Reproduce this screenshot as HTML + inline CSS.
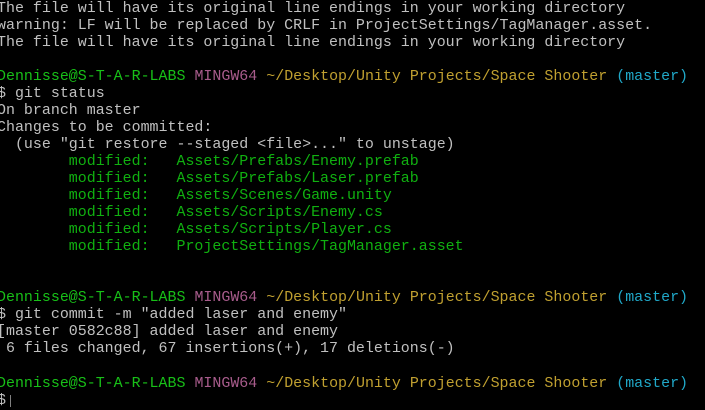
<!DOCTYPE html>
<html><head><style>
html,body{margin:0;padding:0;background:#000;width:705px;height:405px;overflow:hidden}
pre{margin:0;position:absolute;left:-3px;top:0.5px;font-family:"Liberation Mono",monospace;font-size:14.96px;line-height:17.05px;color:#c0c0c0;white-space:pre}
.g{color:#18c018}.m{color:#a85c8c}.y{color:#c0a030}.c{color:#20a8c8}.d{color:#10b010}
.cur{display:inline-block;width:1px;height:12px;background:#808080;vertical-align:-3px;margin-left:4px}
</style></head><body><pre>The file will have its original line endings in your working directory
warning: LF will be replaced by CRLF in ProjectSettings/TagManager.asset.
The file will have its original line endings in your working directory

<span class="g">Dennisse@S-T-A-R-LABS</span> <span class="m">MINGW64</span> <span class="y">~/Desktop/Unity Projects/Space Shooter</span> <span class="c">(master)</span>
$ git status
On branch master
Changes to be committed:
  (use "git restore --staged &lt;file&gt;..." to unstage)
<span class="d">        modified:   Assets/Prefabs/Enemy.prefab
        modified:   Assets/Prefabs/Laser.prefab
        modified:   Assets/Scenes/Game.unity
        modified:   Assets/Scripts/Enemy.cs
        modified:   Assets/Scripts/Player.cs
        modified:   ProjectSettings/TagManager.asset</span>


<span class="g">Dennisse@S-T-A-R-LABS</span> <span class="m">MINGW64</span> <span class="y">~/Desktop/Unity Projects/Space Shooter</span> <span class="c">(master)</span>
$ git commit -m "added laser and enemy"
[master 0582c88] added laser and enemy
 6 files changed, 67 insertions(+), 17 deletions(-)

<span class="g">Dennisse@S-T-A-R-LABS</span> <span class="m">MINGW64</span> <span class="y">~/Desktop/Unity Projects/Space Shooter</span> <span class="c">(master)</span>
$<span class="cur"></span></pre></body></html>
